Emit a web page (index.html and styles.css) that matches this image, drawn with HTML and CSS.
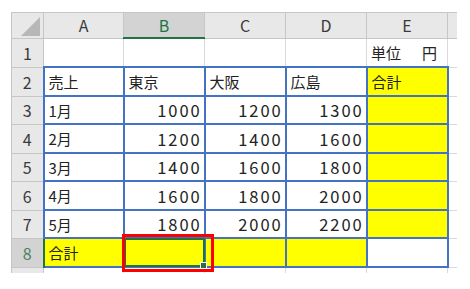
FILE: index.html
```html
<html>
    <head>
        <title>
            売上表
        </title>
        <link rel="stylesheet" href="styles.css">
    </head>
    <body>
        <div class="sheet">
            <table class="grid">
                <colgroup>
                    <col class="col-rh">
                    <col class="col-a">
                    <col class="col-c">
                    <col class="col-c">
                    <col class="col-c">
                    <col class="col-c">
                    <col class="col-f">
                </colgroup>
                <tr class="r-hd">
                    <th class="corner"><span class="tri"></span></th>
                    <th class="ch">A</th>
                    <th class="ch ch-sel">B</th>
                    <th class="ch">C</th>
                    <th class="ch">D</th>
                    <th class="ch">E</th>
                    <th class="ch"></th>
                </tr>
                <tr class="r29">
                    <th class="rh">1</th>
                    <td></td><td></td><td></td><td></td>
                    <td class="txt">単位<span class="unit">円</span></td>
                    <td></td>
                </tr>
                <tr class="r29">
                    <th class="rh">2</th>
                    <td class="b txt">売上</td>
                    <td class="b txt">東京</td>
                    <td class="b txt">大阪</td>
                    <td class="b txt">広島</td>
                    <td class="b txt yel">合計</td>
                    <td></td>
                </tr>
                <tr class="r28">
                    <th class="rh">3</th>
                    <td class="b txt">1月</td>
                    <td class="b num">1000</td>
                    <td class="b num">1200</td>
                    <td class="b num">1300</td>
                    <td class="b yel"></td>
                    <td></td>
                </tr>
                <tr class="r29">
                    <th class="rh">4</th>
                    <td class="b txt">2月</td>
                    <td class="b num">1200</td>
                    <td class="b num">1400</td>
                    <td class="b num">1600</td>
                    <td class="b yel"></td>
                    <td></td>
                </tr>
                <tr class="r28">
                    <th class="rh">5</th>
                    <td class="b txt">3月</td>
                    <td class="b num">1400</td>
                    <td class="b num">1600</td>
                    <td class="b num">1800</td>
                    <td class="b yel"></td>
                    <td></td>
                </tr>
                <tr class="r29">
                    <th class="rh">6</th>
                    <td class="b txt">4月</td>
                    <td class="b num">1600</td>
                    <td class="b num">1800</td>
                    <td class="b num">2000</td>
                    <td class="b yel"></td>
                    <td></td>
                </tr>
                <tr class="r28">
                    <th class="rh">7</th>
                    <td class="b txt">5月</td>
                    <td class="b num">1800</td>
                    <td class="b num">2000</td>
                    <td class="b num">2200</td>
                    <td class="b yel"></td>
                    <td></td>
                </tr>
                <tr class="r29">
                    <th class="rh rh-sel">8</th>
                    <td class="b txt yel">合計</td>
                    <td class="b yel active">
                        <div class="cursor"><span class="handle"></span></div>
                        <div class="mark"></div>
                    </td>
                    <td class="b yel"></td>
                    <td class="b yel"></td>
                    <td class="b"></td>
                    <td></td>
                </tr>
                <tr class="r29">
                    <th class="rh"></th>
                    <td></td><td></td><td></td><td></td><td></td><td></td>
                </tr>
            </table>
        </div>
    </body>
</html>
```

FILE: styles.css
```css
body {
    margin: 0;
    padding: 0;
    background-color: #fff;
    font-family: "Noto Sans CJK JP", "Noto Sans", sans-serif;
}
.sheet {
    margin: 12px 0 0 11px;
    width: 446px;
    height: 261px;
    overflow: hidden;
}
.grid {
    border-collapse: collapse;
    table-layout: fixed;
    width: 446px;
}
.col-rh { width: 32px; }
.col-a { width: 80px; }
.col-c { width: 81px; }
.col-f { width: 10px; }
.grid td {
    border: 1px solid #d9d9d9;
    padding: 0 4px;
    font-size: 15px;
    color: #222;
    white-space: nowrap;
    overflow: visible;
}
.r-hd { height: 25px; }
.r29 { height: 29px; }
.r28 { height: 28px; }

/* headers */
.grid th {
    background-color: #e8e8e8;
    border: 1px solid #c6c6c6;
    font-weight: normal;
    font-size: 16px;
    color: #3a3a3a;
    padding: 0;
}
.corner {
    position: relative;
}
.tri {
    position: absolute;
    right: 3px;
    bottom: 2px;
    width: 0;
    height: 0;
    border-left: 19px solid transparent;
    border-bottom: 19px solid #b7b7b7;
}
.ch-sel {
    background-color: #d3d3d3 !important;
    color: #217346 !important;
    border-bottom: 2px solid #217346 !important;
}
.rh {
    font-size: 16px;
}
.rh-sel {
    background-color: #d3d3d3 !important;
    color: #4e7f63 !important;
    border-right: 2px solid #217346 !important;
}

/* cells */
.grid td.b {
    border: 2px solid #4472c4;
}
.yel {
    background-color: #ffff00;
}
.grid td.num {
    text-align: right;
    font-size: 16.5px;
    letter-spacing: 1.9px;
    padding-right: 2px;
}
.unit {
    margin-left: 21px;
}

/* active cell */
.active {
    position: relative;
}
.cursor {
    position: absolute;
    left: -1px;
    top: -1px;
    right: -1px;
    bottom: -1px;
    border: 2px solid #217346;
}
.handle {
    position: absolute;
    right: -4px;
    bottom: -4px;
    width: 5px;
    height: 5px;
    background-color: #217346;
    border: 1px solid #fff;
}
.mark {
    position: absolute;
    left: -3px;
    top: -5px;
    width: 86px;
    height: 32px;
    border: 3px solid #ff0000;
}
```
